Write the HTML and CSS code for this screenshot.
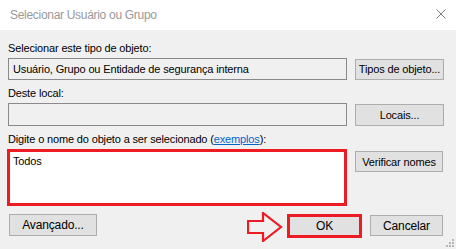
FILE: index.html
```html
<!DOCTYPE html>
<html lang="pt-BR">
<head>
    <meta charset="UTF-8">
    <title>Selecionar Usuário ou Grupo</title>
    <link rel="stylesheet" href="styles.css">
</head>
<body>
    <div class="dialog">
        <div class="titlebar">
            <span class="title">Selecionar Usuário ou Grupo</span>
            <svg class="close" width="10" height="10" viewBox="0 0 10 10">
                <path d="M0.5 0.5 L9.5 9.5 M9.5 0.5 L0.5 9.5" stroke="#7a7a7a" stroke-width="1" fill="none"/>
            </svg>
        </div>
        <div class="content">
            <div class="label first">Selecionar este tipo de objeto:</div>
            <div class="row">
                <div class="field readonly">Usuário, Grupo ou Entidade de segurança interna</div>
                <button class="btn">Tipos de objeto...</button>
            </div>

            <div class="label">Deste local:</div>
            <div class="row row-local">
                <div class="field readonly tall"></div>
                <button class="btn">Locais...</button>
            </div>

            <div class="label">Digite o nome do objeto a ser selecionado (<a href="#">exemplos</a>):</div>
            <div class="row row-names">
                <div class="names">Todos</div>
                <button class="btn">Verificar nomes</button>
            </div>

            <div class="footer">
                <button class="btn advanced">Avançado...</button>
                <div class="actions">
                    <svg class="arrow" width="36" height="30" viewBox="0 0 36 30">
                        <path d="M1 9 L16 9 L16 1 L34 15 L16 29 L16 21 L1 21 Z" fill="none" stroke="#ed1c24" stroke-width="2.2" stroke-linejoin="miter"/>
                    </svg>
                    <div class="ok">OK</div>
                    <button class="btn cancel">Cancelar</button>
                </div>
            </div>
        </div>
        <svg class="grip" width="8" height="8" viewBox="0 0 8 8">
            <rect x="6" y="0" width="2" height="2" fill="#b8b8b8"/>
            <rect x="3" y="3" width="2" height="2" fill="#b8b8b8"/>
            <rect x="6" y="3" width="2" height="2" fill="#b8b8b8"/>
            <rect x="0" y="6" width="2" height="2" fill="#b8b8b8"/>
            <rect x="3" y="6" width="2" height="2" fill="#b8b8b8"/>
            <rect x="6" y="6" width="2" height="2" fill="#b8b8b8"/>
        </svg>
    </div>
</body>
</html>
```
FILE: styles.css
```css
body {
    margin: 0;
    padding: 0;
    background: #f0f0f0;
    font-family: "Liberation Sans", Arial, sans-serif;
    font-size: 11px;
    letter-spacing: -0.15px;
    color: #000;
}

.dialog {
    position: relative;
    width: 456px;
    height: 249px;
    background: #f0f0f0;
    overflow: hidden;
}

.titlebar {
    height: 30px;
    background: #fff;
    display: flex;
    align-items: center;
    justify-content: space-between;
    padding: 0 10px 0 10px;
    box-sizing: border-box;
}

.title {
    font-size: 12px;
    letter-spacing: -0.3px;
    color: #999;
    margin-top: -1px;
}

.close {
    margin-right: 0;
    margin-top: -3px;
}

.content {
    padding: 0 12px 0 8px;
}

.label {
    line-height: 13px;
    margin-top: 7px;
    margin-bottom: 3px;
}

.label.first {
    margin-top: 12px;
}

.label a {
    color: #0066cc;
}

.row {
    display: flex;
    justify-content: space-between;
    align-items: center;
}

.field {
    width: 339px;
    height: 22px;
    box-sizing: border-box;
    border: 1px solid #7a7a7a;
    padding: 3px 4px;
    line-height: 14px;
}

.field.readonly {
    background: #f0f0f0;
    border-color: #8a8a8a;
}

.field.tall {
    height: 23px;
}

.btn {
    font-family: "Liberation Sans", Arial, sans-serif;
    font-size: 11px;
    letter-spacing: -0.15px;
    color: #000;
    background: #e1e1e1;
    border: 1px solid #adadad;
    height: 21px;
    width: 89px;
    padding: 0;
    margin: 0;
}

.row-local .btn {
    height: 22px;
    margin-top: 1px;
}

.row-names {
    align-items: flex-start;
    margin-top: 1px;
}

.row-names .btn {
    margin-top: 2px;
    width: 88px;
    margin-right: 1px;
}

.names {
    width: 340px;
    height: 57px;
    box-sizing: border-box;
    margin-left: -1px;
    border: 3px solid #ed1c24;
    background: #fff;
    padding: 2px 3px;
    line-height: 14px;
}

.footer {
    display: flex;
    justify-content: space-between;
    align-items: flex-start;
    margin-top: 8px;
}

.advanced {
    width: 88px;
    height: 22px;
    margin-left: 1px;
    font-size: 12px;
}

.actions {
    display: flex;
    align-items: flex-start;
}

.arrow {
    margin-top: -2px;
    margin-right: 4px;
}

.ok {
    width: 75px;
    height: 24px;
    box-sizing: border-box;
    border: 3px solid #ed1c24;
    background: #e1e1e1;
    text-align: center;
    line-height: 18px;
    font-size: 12px;
}

.cancel {
    width: 73px;
    height: 21px;
    margin-left: 8px;
    margin-top: 1px;
    margin-right: 1px;
    font-size: 12px;
}

.grip {
    position: absolute;
    right: 2px;
    bottom: 2px;
}
```
